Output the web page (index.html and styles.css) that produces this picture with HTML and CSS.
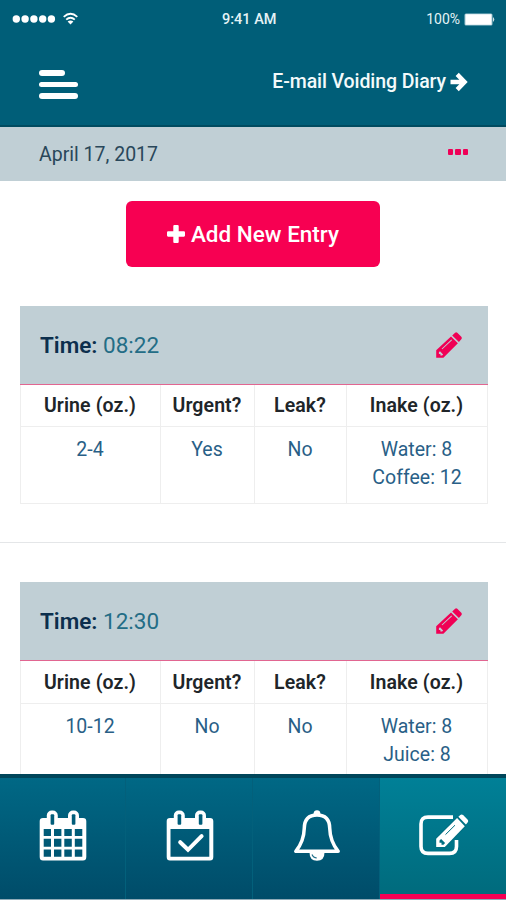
FILE: index.html
```html
<!DOCTYPE html>
<html lang="en">
<head>
<meta charset="utf-8">
<title>Voiding Diary</title>
<link rel="stylesheet" href="styles.css">
</head>
<body>
<svg class="defs" width="0" height="0" aria-hidden="true">
  <symbol id="pencil" viewBox="0 0 26 26">
    <path fill-rule="evenodd" d="M0.2 25.8V18.2L15 4.4L21.9 11.3L7.4 25.8ZM2.9 20.2V22.1H4.4V23.6H6.1L7.1 22.5L4 19.2ZM6.3 17.3L16 8.2L15.4 7.6L5.6 16.7Z"/>
    <path d="M16.2 3.4L19.1.7Q20.2-.2 21.3.8L25.3 4.7Q26.4 6 25.3 7.2L22.9 10.1Z"/>
  </symbol>
</svg>
<div class="screen">
  <header class="header">
    <div class="status">
      <div class="signal">
        <svg width="68" height="16" viewBox="0 0 68 16" fill="#fff">
          <circle cx="4.3" cy="8" r="3.7"/><circle cx="13.1" cy="8" r="3.7"/><circle cx="21.9" cy="8" r="3.7"/><circle cx="30.7" cy="8" r="3.7"/><circle cx="39.4" cy="8" r="3.7"/>
          <g fill="none" stroke="#fff" stroke-width="1.8"><path d="M51.7 5.8q6.8-6 13.6 0M54.2 8.7q4.3-4 8.6 0"/></g>
          <path d="M55.6 10.4q2.9-2 5.8 0l-2.9 3z"/>
        </svg>
      </div>
      <div class="clock">9:41 AM</div>
      <div class="battery"><span>100%</span>
        <svg width="31" height="13" viewBox="0 0 31 13"><rect x=".5" y=".5" width="28" height="12" rx="1.5" fill="#9fc5d1"/><rect x="1.5" y="1.3" width="26" height="10.4" rx=".5" fill="#fff"/><path d="M29.2 4q2 2.5 0 5z" fill="#fff"/></svg>
      </div>
    </div>
    <div class="toolbar">
      <div class="menu"><i></i><i></i><i></i></div>
      <div class="email"><span>E-mail Voiding Diary</span>
        <svg width="18" height="20" viewBox="0 0 18 20" fill="none" stroke="#fff" stroke-width="4.4"><path d="M.5 10H14M7.2 2.4L14.6 10L7.2 17.6"/></svg>
      </div>
    </div>
  </header>
  <div class="datebar"><span class="date">April 17, 2017</span><span class="more"><i></i><i></i><i></i></span></div>
  <main class="content">
    <div class="add">
      <svg width="18" height="18" viewBox="0 0 18 18" fill="#fff"><path d="M6.3 1.1Q6.3 0 7.4 0H10.6Q11.7 0 11.7 1.1V6.3H16.9Q18 6.3 18 7.4V10.6Q18 11.7 16.9 11.7H11.7V16.9Q11.7 18 10.6 18H7.4Q6.3 18 6.3 16.9V11.7H1.1Q0 11.7 0 10.6V7.4Q0 6.3 1.1 6.3H6.3Z"/></svg>
      <span>Add New Entry</span>
    </div>
    <section class="entry">
      <div class="entry-head"><div class="time"><b>Time:</b> <span>08:22</span></div><svg class="pencil" width="26" height="26"><use href="#pencil"/></svg></div>
      <div class="grid">
        <div class="th">Urine (oz.)</div><div class="th">Urgent?</div><div class="th">Leak?</div><div class="th">Inake (oz.)</div>
        <div class="td">2-4</div><div class="td">Yes</div><div class="td">No</div><div class="td">Water: 8<br>Coffee: 12</div>
      </div>
    </section>
    <div class="divider"></div>
    <section class="entry second">
      <div class="entry-head"><div class="time"><b>Time:</b> <span>12:30</span></div><svg class="pencil" width="26" height="26"><use href="#pencil"/></svg></div>
      <div class="grid">
        <div class="th">Urine (oz.)</div><div class="th">Urgent?</div><div class="th">Leak?</div><div class="th">Inake (oz.)</div>
        <div class="td">10-12</div><div class="td">No</div><div class="td">No</div><div class="td">Water: 8<br>Juice: 8</div>
      </div>
    </section>
  </main>
  <nav class="nav">
    <div class="tab">
      <svg width="48" height="51" viewBox="0 0 48 51">
        <path fill="#fff" fill-rule="evenodd" d="M4 8H44Q47.3 8 47.3 11.3V47Q47.3 50.5 44 50.5H4Q.7 50.5 .7 47V11.3Q.7 8 4 8ZM4.7 19V26H12V19ZM15 19V26H22.4V19ZM25.3 19V26H32.8V19ZM35.8 19V26H43.3V19ZM4.7 28.8V36.8H12V28.8ZM15 28.8V36.8H22.4V28.8ZM25.3 28.8V36.8H32.8V28.8ZM35.8 28.8V36.8H43.3V28.8ZM4.7 39.4V46.7H12V39.4ZM15 39.4V46.7H22.4V39.4ZM25.3 39.4V46.7H32.8V39.4ZM35.8 39.4V46.7H43.3V39.4Z"/>
        <rect x="7.8" y=".5" width="11" height="16" rx="5" fill="#fff"/><rect x="29" y=".5" width="11" height="16" rx="5" fill="#fff"/>
        <rect x="11.6" y="4.3" width="3.6" height="10.5" rx="1" fill="#005d7a"/><rect x="32.8" y="4.3" width="3.6" height="10.5" rx="1" fill="#005d7a"/>
      </svg>
    </div>
    <div class="tab">
      <svg width="48" height="51" viewBox="0 0 48 51">
        <path fill="#fff" fill-rule="evenodd" d="M4 8H44Q47.3 8 47.3 11.3V47Q47.3 50.5 44 50.5H4Q.7 50.5 .7 47V11.3Q.7 8 4 8ZM4.5 19V46.7H43.3V19Z"/>
        <rect x="7.8" y=".5" width="11" height="16" rx="5" fill="#fff"/><rect x="29" y=".5" width="11" height="16" rx="5" fill="#fff"/>
        <rect x="11.6" y="4.3" width="3.6" height="10.5" rx="1" fill="#005d7a"/><rect x="32.8" y="4.3" width="3.6" height="10.5" rx="1" fill="#005d7a"/>
        <path d="M14.2 32.2L22 39.8L35.6 26.2" fill="none" stroke="#fff" stroke-width="4" stroke-linecap="round"/>
      </svg>
    </div>
    <div class="tab">
      <svg width="48" height="51" viewBox="0 0 48 51" fill="none" stroke="#fff" stroke-linejoin="round">
        <path stroke-width="3.5" d="M24 5C15.5 5 11.5 10 11.3 18C11 29 8 35 2.8 41.3H45.2C40 35 37 29 36.7 18C36.5 10 32.5 5 24 5Z"/>
        <path fill="#fff" stroke="none" d="M20.6 5V3.5Q20.9.2 24 .2T27.4 3.5V5ZM16.5 42.5H31.5Q31.5 50.8 24 50.8T16.5 42.5Z"/>
        <path stroke="#23718b" stroke-width="1.2" d="M19 44.5Q20.2 47.8 23.8 48"/>
      </svg>
    </div>
    <div class="tab active">
      <svg width="50" height="42" viewBox="0 0 50 42">
        <path d="M34 3.1H9Q2 3.1 2 10V32.5Q2 39.4 9 39.4H30.5Q37.5 39.4 37.5 32.5V26" fill="none" stroke="#fff" stroke-width="3.6"/>
        <path d="M38.1 4.1L45.8 12.2L25.8 33H17.2V24.7Z" fill="#fff" stroke="#007083" stroke-width="2.4" paint-order="stroke"/>
        <path d="M39.4 2.7L41.3.9Q42.7-.2 44.1 1.1L48.5 5.6Q49.8 7 48.6 8.4L46.9 10.5Z" fill="#fff"/>
        <path d="M20.5 26.5l1.6-1.4 4 4-1.6 1.6h-2v-2h-2z" fill="#007083"/><path d="M26.5 20.6L36 11.2" stroke="#007083" stroke-width="1"/>
      </svg>
    </div>
  </nav>
</div>
</body>
</html>
```
FILE: styles.css
```css
* { box-sizing: border-box; }
body { margin: 0; font-family: Roboto, "Liberation Sans", sans-serif; background: #fff; }
svg { display: block; flex: none; }
.defs { position: absolute; }
.screen { width: 506px; height: 900px; display: flex; flex-direction: column; overflow: hidden; }
.header { flex: none; height: 127px; background: #005e78; border-bottom: 2px solid #004b60; color: #fff; }
.status { height: 38px; padding: 0 11px 0 12px; display: grid; grid-template-columns: 210px 1fr auto; align-items: center; font-size: 14.5px; font-weight: 500; }
.signal { padding-bottom: 1px; }
.clock { color: #e4f3f6; }
.battery { display: flex; justify-content: flex-end; align-items: center; gap: 4px; color: #e4f3f6; font-size: 14px; font-weight: 400; }
.toolbar { height: 87px; padding: 0 38px 0 39px; display: flex; justify-content: space-between; align-items: center; }
.menu { display: flex; flex-direction: column; gap: 6px; margin-top: 6px; }
.menu i { width: 39px; height: 5.6px; border-radius: 3px; background: #fff; }
.menu i:first-child { width: 26px; }
.email { display: flex; align-items: center; gap: 4px; font-size: 19.5px; font-weight: 500; letter-spacing: -.1px; color: #f3fafb; }
.datebar { flex: none; height: 54px; background: #c0cfd5; padding: 0 38px 0 39px; display: flex; align-items: center; justify-content: space-between; color: #29475a; font-size: 19.5px; }
.more { display: flex; gap: 2px; margin-bottom: 5px; }
.more i { width: 5.4px; height: 6px; border-radius: 1px; background: #ef0057; }
.content { flex: 1; min-height: 0; overflow: hidden; padding-top: 20px; }
.add { width: 254px; height: 66px; margin: 0 auto; border-radius: 6px; background: #f70052; color: #fff; display: flex; align-items: center; justify-content: center; gap: 6px; font-size: 22.5px; font-weight: 500; }
.entry { width: 468px; margin: 39px 0 0 20px; }
.entry-head { height: 79px; background: #c0cfd5; border-bottom: 1px solid #e16691; padding: 0 26px 0 20px; display: flex; justify-content: space-between; align-items: center; }
.time { font-size: 22.5px; color: #236d86; }
.time b { color: #0c2f4d; font-weight: 600; }
.pencil { fill: #f00055; }
.grid { display: grid; grid-template-columns: 140px 94px 92px 141px; grid-template-rows: 42px 77px; border-left: 1px solid #eee; }
.th, .td { border-right: 1px solid #eee; border-bottom: 1px solid #eee; text-align: center; text-indent: -1px; }
.th { font-size: 19.5px; font-weight: 600; line-height: 41px; color: #202529; letter-spacing: .1px; }
.td { font-size: 19.5px; line-height: 28px; padding-top: 9px; color: #295f87; }
.divider { height: 1px; background: #e4e6e8; margin-top: 38px; }
.second .grid { grid-template-rows: 43px 77px; }
.second .th { line-height: 43px; }
.nav { flex: none; height: 126px; border-top: 4px solid #00465a; border-bottom: 1px solid #8fabb8; display: grid; grid-template-columns: 126px 127px 127px 126px; background: linear-gradient(#006885, #004c69); }
.tab { display: flex; justify-content: center; padding: 32px 0 0 1px; border-right: 1px solid #03607b; }
.tab.active { padding-top: 36px; border: 0; border-bottom: 5px solid #f40054; background: linear-gradient(#008097, #006b7d); }
```
